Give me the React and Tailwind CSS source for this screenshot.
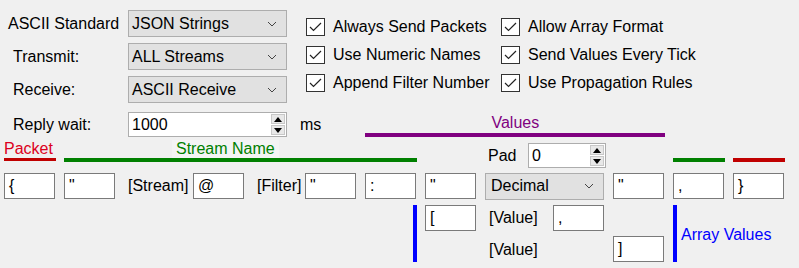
const Chevron = () => (
  <svg width="10" height="6" viewBox="0 0 10 6" className="shrink-0">
    <path d="M1 1 L5 5 L9 1" fill="none" stroke="#444" strokeWidth="1" />
  </svg>
);

const Combo = ({ value, className = "" }) => (
  <div className={`flex items-center justify-between h-[27px] bg-[#e1e1e1] border border-[#adadad] pl-[3px] pr-[9px] ${className}`}>
    <span>{value}</span>
    <Chevron />
  </div>
);

const Spin = ({ value, className = "" }) => (
  <div className={`flex items-center h-[25px] bg-white border border-[#adadad] pl-[3px] pr-[1px] ${className}`}>
    <span className="flex-1">{value}</span>
    <div className="flex flex-col gap-[1px]">
      <div className="w-[14px] h-[10px] bg-[#e8e8e8] border border-[#c8c8c8] flex items-center justify-center">
        <svg width="8" height="5" viewBox="0 0 8 5"><path d="M0 5 L4 0 L8 5 Z" fill="#000" /></svg>
      </div>
      <div className="w-[14px] h-[10px] bg-[#e8e8e8] border border-[#c8c8c8] flex items-center justify-center">
        <svg width="8" height="5" viewBox="0 0 8 5"><path d="M0 0 L4 5 L8 0 Z" fill="#000" /></svg>
      </div>
    </div>
  </div>
);

const Box = ({ value, className = "" }) => (
  <div className={`flex items-center w-[51px] h-[26px] bg-white border border-[#7a7a7a] pl-[4px] shrink-0 ${className}`}>
    {value}
  </div>
);

const Check = ({ label }) => (
  <div className="flex items-center h-[18px]">
    <div className="w-[19px] h-[18px] bg-white border border-[#333] flex items-center justify-center">
      <svg width="13" height="10" viewBox="0 0 13 10">
        <path d="M1 5 L4.5 8.5 L12 1" fill="none" stroke="#222" strokeWidth="1.2" />
      </svg>
    </div>
    <span className="ml-[8px] whitespace-nowrap">{label}</span>
  </div>
);

export default function App() {
  return (
    <div className="w-[799px] h-[268px] bg-[#f0f0f0] text-black text-[16px] leading-[18px] overflow-hidden font-['Liberation_Sans',Arial,sans-serif]">
      {/* top settings */}
      <div className="flex items-start pt-[10px]">
        <div className="flex flex-col gap-[6px] pl-[8px]">
          <div className="flex items-center">
            <span className="w-[120px]">ASCII Standard</span>
            <Combo value="JSON Strings" className="w-[159px]" />
          </div>
          <div className="flex items-center">
            <span className="w-[120px] pl-[5px]">Transmit:</span>
            <Combo value="ALL Streams" className="w-[159px]" />
          </div>
          <div className="flex items-center">
            <span className="w-[120px] pl-[5px]">Receive:</span>
            <Combo value="ASCII Receive" className="w-[159px]" />
          </div>
        </div>
        <div className="grid grid-cols-[195px_auto] gap-y-[10px] ml-[19px] mt-[8px]">
          <Check label="Always Send Packets" />
          <Check label="Allow Array Format" />
          <Check label="Use Numeric Names" />
          <Check label="Send Values Every Tick" />
          <Check label="Append Filter Number" />
          <Check label="Use Propagation Rules" />
        </div>
      </div>

      {/* reply wait + values header */}
      <div className="flex items-start mt-[9px] pl-[8px] h-[25px]">
        <div className="flex items-center">
          <span className="w-[120px] pl-[5px]">Reply wait:</span>
          <Spin value="1000" className="w-[159px]" />
          <span className="ml-[13px]">ms</span>
        </div>
        <div className="ml-[44px] w-[300px] flex flex-col items-center">
          <span className="text-[#800080] mt-[2px]">Values</span>
          <div className="w-full h-[4px] bg-[#800080] mt-[1px]" />
        </div>
      </div>

      {/* section headers */}
      <div className="flex items-start h-[36px]">
        <div className="ml-[4px] w-[52px] flex flex-col pt-[3px]">
          <span className="text-[#dc0020]">Packet</span>
          <div className="h-[3px] bg-[#c00000]" />
        </div>
        <div className="ml-[8px] w-[353px] flex flex-col items-start pt-[3px]">
          <span className="ml-[108px] text-[#008000] bg-[#f4f4f4] px-[4px]">Stream Name</span>
          <div className="w-full h-[4px] bg-[#008000]" />
        </div>
        <div className="ml-[71px] flex items-center mt-[6px]">
          <span className="w-[40px]">Pad</span>
          <Spin value="0" className="w-[78px]" />
        </div>
        <div className="ml-[67px] w-[52px] h-[4px] bg-[#008000] mt-[21px]" />
        <div className="ml-[8px] w-[52px] h-[4px] bg-[#c00000] mt-[21px]" />
      </div>

      {/* format fields */}
      <div className="flex items-center h-[26px]">
        <Box value="{" className="ml-[4px]" />
        <Box value={'"'} className="ml-[9px]" />
        <span className="ml-[13px] w-[65px]">[Stream]</span>
        <Box value="@" />
        <span className="ml-[13px] w-[48px]">[Filter]</span>
        <Box value={'"'} />
        <Box value=":" className="ml-[9px]" />
        <Box value={'"'} className="ml-[9px]" />
        <Combo value="Decimal" className="ml-[9px] w-[119px] !pl-[5px]" />
        <Box value={'"'} className="ml-[9px]" />
        <Box value="," className="ml-[9px]" />
        <Box value="}" className="ml-[9px]" />
      </div>

      {/* array fields */}
      <div className="flex items-start mt-[6px] h-[58px]">
        <div className="ml-[413px] w-[4px] h-[57px] bg-[#0000ff]" />
        <Box value="[" className="ml-[8px]" />
        <div className="ml-[9px] w-[119px] flex flex-col">
          <div className="flex items-center h-[26px]">
            <span className="pl-[4px] w-[69px]">[Value]</span>
            <Box value="," />
          </div>
          <span className="pl-[4px] mt-[10px]">[Value]</span>
        </div>
        <Box value="]" className="ml-[9px] self-end mb-[1px]" />
        <div className="ml-[9px] w-[4px] h-[57px] bg-[#0000ff]" />
        <span className="ml-[4px] mt-[21px] text-[#0000ff]">Array Values</span>
      </div>
    </div>
  );
}
